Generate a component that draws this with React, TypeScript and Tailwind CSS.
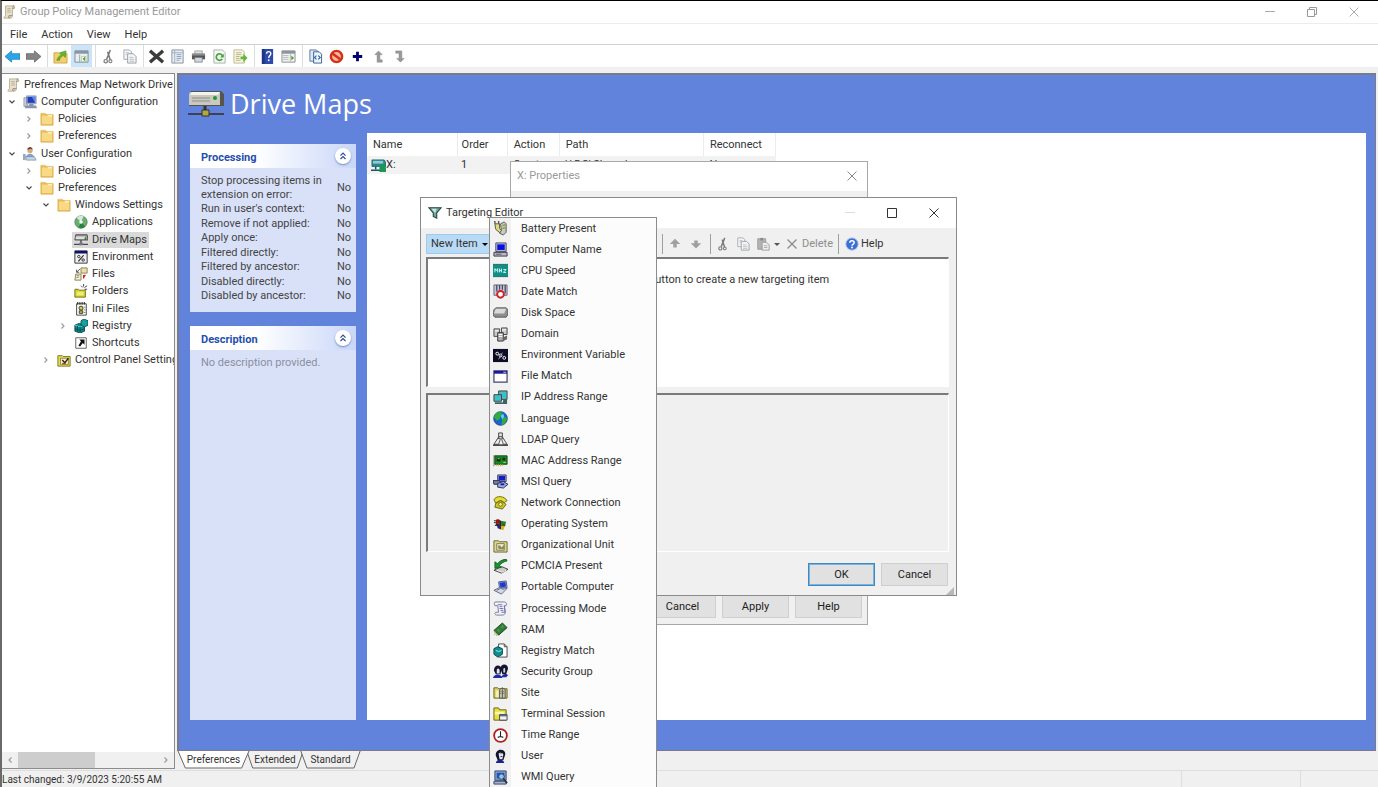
import type { ReactNode } from 'react'
import { clsx } from 'clsx'

const ICONS: Record<string, ReactNode> = {
  scroll: (
    <>
      <path d="M4 1h10l-2 2v9c0 2-1 3-3 3H2l2-3z" fill="#e6dfcd" stroke="#a89c80" strokeWidth=".8" />
      <path d="M12 1c2 0 3 1 2 3h-2M9 15c-2 0-2-2-1-3h4" fill="#c9bea0" stroke="#8f8468" strokeWidth=".8" />
      <path d="M6 4h4M6 6h4M6 8h4" stroke="#b8ae95" />
    </>
  ),
  back: <path d="M0 8l7-6v3h9v6H7v3z" fill="#2aa5e8" stroke="#1c7fbd" strokeWidth=".8" />,
  forward: <path d="M16 8L9 2v3H0v6h9v3z" fill="#848484" stroke="#666" strokeWidth=".8" />,
  folderUp: (
    <>
      <path d="M1 4h5l1 1h8v10H1z" fill="#f3cf6c" stroke="#c39a3a" strokeWidth=".8" />
      <path d="M4 12c1-3 3-5 5-6L7 4l7-2-1 7-2-2c-2 1-4 3-4 5z" fill="#62b52c" stroke="#43891a" strokeWidth=".6" />
    </>
  ),
  paneLeft: (
    <>
      <path d="M1 2h14v12H1z" fill="#e9eef3" stroke="#7f8a94" />
      <path d="M1 2h14v3H1z" fill="#8796a3" />
      <path d="M6 6v8" stroke="#9aa" />
      <path d="M8 8h5v5H8z" fill="#fff" stroke="#9bb88c" strokeWidth=".6" />
      <path d="M12 8v5l-3-2.500z" fill="#5aa02c" />
    </>
  ),
  paneRight: (
    <>
      <path d="M1 2h14v12H1z" fill="#f1f1ef" stroke="#8b9096" />
      <path d="M1 2h14v3H1z" fill="#8b949c" />
      <path d="M2 7h6M2 9h6M2 11h6M10 5v9" stroke="#b5bac0" />
      <path d="M11 7v5l3-2.500z" fill="#5aa02c" />
    </>
  ),
  cut: (
    <>
      <path d="M10 1L6 11M7 3l3 9" stroke="#777" strokeWidth="1.600" fill="none" />
      <circle cx="5" cy="13" r="1.800" fill="none" stroke="#777" strokeWidth="1.300" />
      <circle cx="10" cy="13" r="1.600" fill="none" stroke="#888" strokeWidth="1.300" />
    </>
  ),
  copy: (
    <>
      <path d="M2 1h6l2 2v8H2z" fill="#f4f4f4" stroke="#a5abb2" />
      <path d="M6 5h6l3 3v7H6z" fill="#f4f4f4" stroke="#989ea6" />
      <path d="M4 4h3M4 6h2M8 9h4M8 11h5M8 13h5" stroke="#b9bfc6" />
    </>
  ),
  paste: (
    <>
      <path d="M2 2h9v12H2z" fill="#b3b3b3" stroke="#999" />
      <path d="M5 1h3v3H5z" fill="#888" />
      <path d="M7 6h5l3 3v6H7z" fill="#ededed" stroke="#999" />
      <path d="M9 10h4M9 12h4" stroke="#aaa" />
    </>
  ),
  delete: <path d="M1 2l14 12M15 2L1 14" stroke="#3c3c3c" strokeWidth="3.600" fill="none" />,
  thinX: <path d="M2 2l12 12M14 2L2 14" stroke="#8d8d8d" strokeWidth="1.800" fill="none" />,
  properties: (
    <>
      <path d="M2 1h12v14H2z" fill="#e8edf2" stroke="#8793a0" />
      <path d="M2 4h12M5 1v14" stroke="#9fb0c0" />
      <path d="M7 6h5M7 8h5M7 10h5M7 12h3" stroke="#87a2bf" />
    </>
  ),
  print: (
    <>
      <path d="M4 2h8v4H4z" fill="#dcdcdc" stroke="#999" strokeWidth=".8" />
      <path d="M1 5h14v6H1z" fill="#555" />
      <path d="M1 5h14v2H1z" fill="#8b8b8b" />
      <path d="M4 9h8v5H4z" fill="#cfd9e4" stroke="#777" strokeWidth=".8" />
    </>
  ),
  refresh: (
    <>
      <path d="M2 1h9l3 3v11H2z" fill="#f7f7f7" stroke="#a9b0a5" />
      <path d="M11.500 8A3.500 3.500 0 1 0 11 10.500" fill="none" stroke="#45a53a" strokeWidth="1.800" />
      <path d="M12.500 5v4h-4z" fill="#45a53a" />
    </>
  ),
  exportList: (
    <>
      <path d="M1 1h9l2 2v12H1z" fill="#f8f6e6" stroke="#bcb78e" />
      <path d="M3 4h6M3 6h6M3 8h4M3 10h4M3 12h5" stroke="#b9b27a" />
      <path d="M8 8h3V5l4.500 4.500L11 14v-3H8z" fill="#62b63a" />
    </>
  ),
  helpBook: (
    <>
      <path d="M2 0h12v16H2z" fill="#2c4aa8" />
      <path d="M2 0h3v16H2z" fill="#1d3480" />
      <path d="M7 5c0-3 4.500-3 4.500 0 0 2-2.200 2-2.200 4.500" fill="none" stroke="#fff" strokeWidth="1.500" />
      <circle cx="9.300" cy="12" r="1" fill="#fff" />
    </>
  ),
  docSearch: (
    <>
      <path d="M2 1h7l2 2v10H2z" fill="#dde9f7" stroke="#58789e" />
      <path d="M6 3h6l2.500 2.500V15H6z" fill="#edf4fb" stroke="#3b5f8d" />
      <path d="M9 7l-2 2 2 2M11 7l2 2-2 2" fill="none" stroke="#2b60b0" strokeWidth="1.200" />
    </>
  ),
  stop: (
    <>
      <circle cx="8" cy="8" r="6" fill="#f2b8a4" stroke="#d83014" strokeWidth="2.600" />
      <path d="M4 5l8 6" stroke="#d83014" strokeWidth="2.600" />
    </>
  ),
  plus: <path d="M8 3v10M3 8h10" stroke="#00006e" strokeWidth="3" />,
  bendUp: <path d="M8 2L4 6h2.500v8H12v-2.500H9.500V6H12z" fill="#999" stroke="#888" strokeWidth=".5" />,
  bendDown: <path d="M9 14l-4-4h2.500V4.500H4V2h6.500v8H13z" fill="#999" stroke="#888" strokeWidth=".5" />,
  computer: (
    <>
      <path d="M1 3h4v10H1z" fill="#c8ccd6" stroke="#777d90" strokeWidth=".7" />
      <path d="M4 1h11v9H4z" fill="#d3d6de" stroke="#6a7084" strokeWidth=".7" />
      <path d="M5 2h9v7H5z" fill="#1c3fc4" />
      <path d="M10 2h4v7z" fill="#5f86ee" />
      <path d="M7 10h5v2H7zM3 12h12l1 3H2z" fill="#8b93ad" />
    </>
  ),
  userConfig: (
    <>
      <circle cx="8" cy="4" r="3" fill="#d8a878" />
      <path d="M5 3c0-4 6-4 6 0l-2-1z" fill="#5c4630" />
      <path d="M3 13c0-7 10-7 10 0z" fill="#7ea4cc" />
      <path d="M0 8h3v7H0z" fill="#9aa8c0" />
      <path d="M3 11h10l2 4H4z" fill="#c5d2e0" stroke="#6f87a5" strokeWidth=".7" />
    </>
  ),
  folder: (
    <>
      <path d="M1 2h6l1 1h7v12H1z" fill="#e9bb55" />
      <path d="M2 4h12v10H2z" fill="#f9d983" />
      <path d="M9 2h5v3H9z" fill="#fff3c9" />
      <path d="M1 1.500h5l1 1.500h8v12H1z" fill="none" stroke="#d6a443" strokeWidth=".7" />
    </>
  ),
  disc: (
    <>
      <circle cx="8" cy="8" r="7" fill="#68b06d" stroke="#5a7a60" />
      <path d="M8 8L3 3a7 7 0 0 1 8-1.500z" fill="#d6e9d5" />
      <path d="M8 8l5 5a7 7 0 0 1-8 1.500z" fill="#2e8244" />
      <circle cx="8" cy="8" r="2" fill="#fff" />
    </>
  ),
  netDrive: (
    <>
      <path d="M2 2h13l1 6H1z" fill="#9d9d9d" stroke="#444" />
      <path d="M2 4h11v3H2z" fill="#dedede" />
      <path d="M13 5v3" stroke="#267a2c" strokeWidth="1.500" />
      <path d="M8 8v5M0 13h16" stroke="#4a4a4a" strokeWidth="1.600" />
      <path d="M6 11h4v3H6z" fill="#777" />
    </>
  ),
  mappedDrive: (
    <>
      <path d="M1 2h13l2 3v4H1z" fill="#28888e" stroke="#185b63" strokeWidth=".8" />
      <path d="M2 3h11v3H2z" fill="#8fcbd6" />
      <path d="M5 9v3M0 13h12" stroke="#1c5560" strokeWidth="1.600" />
      <path d="M9 15V9l3-3 4 4v5z" fill="#179a58" />
    </>
  ),
  envWindow: (
    <>
      <path d="M1 1h14v14H1z" fill="#f2f2f2" stroke="#222" />
      <path d="M1 1h14v3H1z" fill="#101070" />
      <circle cx="5.500" cy="7.500" r="1.400" fill="none" stroke="#222" />
      <circle cx="10.500" cy="11.500" r="1.400" fill="none" stroke="#222" />
      <path d="M11 6l-6 7" stroke="#222" strokeWidth="1.300" />
    </>
  ),
  files: (
    <>
      <path d="M8 1h7v6H8z" fill="#e8e0ac" stroke="#857c48" />
      <path d="M2 8h6v7H1z" fill="#f2eecb" stroke="#857c48" />
      <path d="M3 6l4-4M3 6V3M3 6h3" stroke="#444" fill="none" />
      <path d="M11 9v4M13 9l-2 3" stroke="#d32020" strokeWidth="1.500" />
      <path d="M3 10h3M3 12h2" stroke="#777" />
    </>
  ),
  newFolder: (
    <>
      <path d="M1 6h4l1 1h7v8H1z" fill="#d5d531" stroke="#6b6b10" />
      <path d="M3 9h8v4H3z" fill="#eeee77" />
      <path d="M11 0v3M8 2l2 2M15 2l-3 2M15 6h-3" stroke="#333" />
    </>
  ),
  ini: (
    <>
      <path d="M3 2h11v13H3z" fill="#fff" stroke="#333" />
      <path d="M4 0v3M6 0v3M8 0v3M10 0v3M12 0v3" stroke="#333" />
      <circle cx="8" cy="7" r="2.300" fill="#d4cc38" stroke="#333" />
      <path d="M6 10h4v3H6z" fill="#c4bc38" stroke="#333" />
      <path d="M11 6h2M11 9h2M11 12h2" stroke="#777" />
    </>
  ),
  registry: (
    <>
      <path d="M1 7l5-2 6 2v7l-5 2-6-2z" fill="#0d8888" stroke="#054a4a" />
      <path d="M1 7l6 2 5-2" fill="none" stroke="#6ddcdc" />
      <path d="M8 2l3-2 5 2v5l-4 2-4-2z" fill="#17a0a0" stroke="#054a4a" />
      <path d="M7 9v6M4 8v6M1 11l6 2 5-2" stroke="#054a4a" fill="none" />
    </>
  ),
  shortcut: (
    <>
      <path d="M2 2h12v12H2z" fill="#fff" stroke="#555" />
      <path d="M6 4h6v6l-2-2-3 4-2-1 3-5z" fill="#111" />
    </>
  ),
  controlFolder: (
    <>
      <path d="M1 3h5l1 1h8v11H1z" fill="#e3dc4c" stroke="#77701a" />
      <path d="M4 6h9v7H4z" fill="#f6f3c0" stroke="#555" strokeWidth=".7" />
      <path d="M6 8l3 3 4-5" fill="none" stroke="#222" strokeWidth="1.600" />
      <path d="M6 12h4" stroke="#cc2d1b" strokeWidth="1.500" />
    </>
  ),
  funnel: (
    <>
      <path d="M1 2h14l-5 6v6l-4-2V8z" fill="#6aa79b" stroke="#26413f" strokeWidth="1.200" />
      <path d="M4 3h6L8 8z" fill="#cfe6e0" />
    </>
  ),
  help: (
    <>
      <circle cx="8" cy="8" r="7" fill="#3a6fd8" stroke="#a9bce0" />
      <path d="M5.500 6.500c0-3 5-3 5 0 0 1.800-2.300 1.600-2.500 3.500" fill="none" stroke="#fff" strokeWidth="1.700" />
      <circle cx="8" cy="12" r="1.100" fill="#fff" />
    </>
  ),
  battery: (
    <>
      <path d="M2 3h5v5l3 3-2 2-5-4z" fill="#dcd98a" stroke="#5a5a3a" />
      <path d="M2 0v3M6 0v3" stroke="#555" strokeWidth="1.500" />
      <path d="M8 3l4-2 2 2v9l-3 3-4-2 2-3z" fill="#c9cbbd" stroke="#555" />
      <path d="M10 5l3-1M10 8l3-1" stroke="#8c9d42" strokeWidth="1.500" />
    </>
  ),
  pc: (
    <>
      <path d="M3 1h11v9H3z" fill="#c4c4d0" stroke="#44445c" />
      <path d="M4.500 2.500h8v6h-8z" fill="#0810e0" />
      <path d="M1 11h14v4H1z" fill="#b9b9c8" stroke="#33334a" />
      <path d="M3 13h6" stroke="#555" />
    </>
  ),
  cpu: (
    <>
      <path d="M0 1h16v14H0z" fill="#0f8f86" />
      <path d="M0 1.500h16M0 14.500h16" stroke="#4f615f" strokeDasharray="1.500 1" />
      <path d="M2 10V6l1.500 2L5 6v4M7 6v4M7 8h2M9 6v4M11 7h3l-3 3h3" fill="none" stroke="#d6fffb" />
    </>
  ),
  date: (
    <>
      <path d="M1 1h14v11H1z" fill="#c5c5d4" stroke="#66667a" />
      <path d="M4 1v7M7 1v5M10 1v5M13 1v9" stroke="#454568" strokeWidth="1.300" />
      <circle cx="8" cy="11" r="3.600" fill="#fff" stroke="#cf2020" strokeWidth="2" />
    </>
  ),
  disk: (
    <>
      <path d="M3 3h11l2 2v5l-2 3H2l-2-2V6z" fill="#8e8e8e" stroke="#444" strokeWidth=".8" />
      <path d="M3 4h11L12 9H1z" fill="#dadada" />
    </>
  ),
  domain: (
    <>
      <path d="M1 2h6v8H1zM9 1h6v7H9z" fill="#c9c9c9" stroke="#444" />
      <path d="M5 6h6v9H5z" fill="#ababab" stroke="#333" />
      <path d="M2 4h4M10 3h4M6 8h4M6 10h4" stroke="#fff" />
      <path d="M11 11l4-2v4l-4 2z" fill="#666" />
    </>
  ),
  envVar: (
    <>
      <path d="M0 1h16v14H0z" fill="#0c0c24" />
      <circle cx="4.500" cy="6" r="1.500" fill="none" stroke="#fff" />
      <circle cx="8" cy="8" r="1.500" fill="none" stroke="#fff" />
      <circle cx="12" cy="10.500" r="1.500" fill="none" stroke="#fff" />
      <path d="M10 5l-4 7" stroke="#aab" />
    </>
  ),
  window: (
    <>
      <path d="M1 2h14v12H1z" fill="#fff" stroke="#44446a" strokeWidth="1.300" />
      <path d="M1 2h14v3H1z" fill="#1a1a9a" />
      <path d="M11 3.500h3" stroke="#ccd" />
    </>
  ),
  ipRange: (
    <>
      <path d="M6 1h9v9H6z" fill="#7fa9ab" stroke="#1c4b52" />
      <path d="M8 3h6v5H8z" fill="#27c8d0" />
      <path d="M1 5h8v7H1z" fill="#7fa9ab" stroke="#1c4b52" />
      <path d="M2.500 6.500h5v4h-5z" fill="#27c8d0" />
      <path d="M2 13h8v2H2zM11 10h4v5h-5" fill="#3f6066" />
    </>
  ),
  globe: (
    <>
      <circle cx="8" cy="8" r="7.300" fill="#1c62cf" stroke="#123a7c" strokeWidth=".8" />
      <path d="M2 4c3-4 6-3 8-2l-2 3-1 4-3 1-3-3zM10 8l4-2 1 3-3 5-3 1z" fill="#2fae3c" />
      <path d="M8 5l3-2 1 3-2 3z" fill="#5fd3e6" />
    </>
  ),
  ldap: (
    <>
      <path d="M8 2L2 13M8 2l6 11" stroke="#555" strokeWidth="1.400" />
      <path d="M6 1h4v4H6z" fill="#e2e2e2" stroke="#444" />
      <path d="M5 7h3l-2 6H1zM9 7h2l4 6h-4z" fill="#eee" stroke="#555" />
      <path d="M0 14h16" stroke="#333" strokeWidth="1.600" />
    </>
  ),
  mac: (
    <>
      <path d="M0 2h2v12H0z" fill="#b8b8a0" />
      <path d="M2 3h13v9H2z" fill="#1c8a25" stroke="#0c4512" />
      <path d="M4 5h4v4H4zM10 5h3v3h-3z" fill="#10300f" />
      <path d="M4 12v2M6 12v2M8 12v2M10 12v2" stroke="#c9b13d" />
      <path d="M5 6h2M11 10h3" stroke="#b0e068" />
    </>
  ),
  msi: (
    <>
      <path d="M5 1h9v7H5z" fill="#b9bdd0" stroke="#3a3e5a" />
      <path d="M6 2h7v5H6z" fill="#1020c0" />
      <path d="M0 7h7l2 4H1z" fill="#767ca0" stroke="#2a2f55" />
      <path d="M5 10l6-2 5 3-5 4-6-1z" fill="#9fa9d8" stroke="#2a2f55" />
      <path d="M8 11h4" stroke="#1020c0" strokeWidth="2" />
    </>
  ),
  network: (
    <>
      <path d="M1 5c3-5 11-4 14 1l-3 2-3-2-4 1-2 2z" fill="#e4df2e" stroke="#6b6710" />
      <path d="M3 9l5-3 6 4-4 5-8-2z" fill="#cdc724" stroke="#6b6710" />
      <circle cx="8" cy="10" r="2" fill="#f6f3a0" stroke="#6b6710" />
    </>
  ),
  flag: (
    <>
      <path d="M3 3c2-1 3-1 5 1v4C6 7 5 7 3 8z" fill="#8a1c18" />
      <path d="M8 4l6 1-1 4-5-1z" fill="#2c7a2c" />
      <path d="M4 8c2-1 3 0 4 1v4l-3-1z" fill="#22229a" />
      <path d="M8 8l5 1-2 5-3-1z" fill="#d3b818" />
      <path d="M1 4h2M1 6h2M2 9h3M8 4v9M3 8l10 1" stroke="#222" />
    </>
  ),
  orgUnit: (
    <>
      <path d="M1 3h5l1 1h8v11H1z" fill="#dcd98a" stroke="#66633a" />
      <path d="M4 6h8v7H4z" fill="#f1efc8" stroke="#66633a" strokeWidth=".8" />
      <path d="M5 8h3l1 2 3-3v5H6z" fill="#8c8a68" />
    </>
  ),
  pcmcia: (
    <>
      <path d="M1 12l8-4 7 3-7 4z" fill="#c9c9c9" stroke="#444" />
      <path d="M14 0C9 1 6 3 5 5L2 3v7l7-1-2-2c1-2 4-4 8-5z" fill="#1a9433" stroke="#0b4f18" strokeWidth=".8" />
      <path d="M4 12l6 2 4-2" stroke="#eee" fill="none" />
    </>
  ),
  laptop: (
    <>
      <path d="M6 2l8-1 1 7-8 1z" fill="#9fb4e6" stroke="#4a5a8a" />
      <path d="M7 3l6-1 1 5-6 1z" fill="#2038d0" />
      <path d="M1 11l6-3 8 1-6 6z" fill="#d5d9e6" stroke="#5b6585" />
      <path d="M4 11l4-2 4 1" fill="none" stroke="#667" />
    </>
  ),
  processing: (
    <>
      <path d="M3 1h9c2 0 3 2 2 4h-2l1 7c0 2-1 3-3 3H4c-2 0-3-2-1-3h3L5 5H2c-1-2-1-4 1-4z" fill="#f1f1fb" stroke="#77779a" />
      <path d="M5 4h5M7 6h3M7 8h4M8 10h3M12 5l1 7H9" stroke="#6d6db0" fill="none" />
    </>
  ),
  ram: (
    <>
      <path d="M1 9l9-8 5 5-9 8z" fill="#278034" stroke="#134a1c" />
      <path d="M4 9l2-2 2 2-2 2zM8 5l2-2 2 2-2 2z" fill="#65805e" />
      <path d="M2 10v4M4 12v3" stroke="#c0b34e" />
    </>
  ),
  regMatch: (
    <>
      <path d="M6 1h6l3 3v11H6z" fill="#fff" stroke="#444" />
      <path d="M12 1v3h3" fill="none" stroke="#444" />
      <path d="M1 6l4-2 5 2v6l-5 3-4-3z" fill="#128c8c" stroke="#064747" />
      <path d="M3 8l3 1 3-1" fill="none" stroke="#8ff" />
    </>
  ),
  group: (
    <>
      <path d="M1 7c0-7 8-7 8-1l-1 5H3z" fill="#14142c" />
      <path d="M4 6c1-2 3-1 3 1v3H4z" fill="#e3e3ee" />
      <path d="M8 5c0-6 8-6 8 0l-2 6h-4z" fill="#14142c" />
      <path d="M11 5c1-1 2-1 2 1v3h-2z" fill="#ccd0e6" />
      <path d="M0 15c1-5 9-5 10 0zM9 14c1-4 6-4 7-2l-2 2z" fill="#1c2aa8" />
    </>
  ),
  site: (
    <>
      <path d="M1 3h4l1 1h9v10H1z" fill="#dcd66a" stroke="#66601a" />
      <path d="M3 6h3v7H3z" fill="#f3f0b4" />
      <path d="M7 5l3-2 3 2v9H7z" fill="#c9c9b6" stroke="#555" />
      <path d="M10 3v11M8 7h1M8 9h1M11 7h1M11 9h1" stroke="#555" />
    </>
  ),
  terminal: (
    <>
      <path d="M1 1h5l1 2h7v11H1z" fill="#e6df3e" stroke="#66601a" />
      <path d="M2 5h10v3H2z" fill="#f8f5a4" />
      <path d="M7 8h8v6H7z" fill="#f2f2f2" stroke="#444" />
      <path d="M7 8h8v2H7z" fill="#5a6494" />
    </>
  ),
  clock: (
    <>
      <circle cx="8" cy="8" r="6.800" fill="#fff" stroke="#b01f1f" strokeWidth="1.900" />
      <path d="M8 3.500V9l3 1M8 9l-3 1" fill="none" stroke="#222" strokeWidth="1.200" />
    </>
  ),
  user: (
    <>
      <path d="M3 7c-1-8 11-8 10-1l-2 6H5z" fill="#14142c" />
      <path d="M6 5c1-2 5-1 5 1l-1 5H7z" fill="#e6e6f2" />
      <path d="M8 5h1M8 8h2" stroke="#333" />
      <path d="M3 15c1-5 8-5 9 0z" fill="#1a2490" />
    </>
  ),
  wmi: (
    <>
      <path d="M2 1h12v10H2z" fill="#8aa0c4" stroke="#32466e" />
      <path d="M4 3h8v6H4z" fill="#1c4fd0" />
      <path d="M1 12h13v3H1z" fill="#a6b0c6" stroke="#32466e" />
      <circle cx="9" cy="7" r="3" fill="#8cc4ee" stroke="#245" />
      <path d="M11 9l4 5" stroke="#234" strokeWidth="1.800" />
    </>
  ),
}

function Icon({ name, className = 'w-4 h-4' }: { name: string; className?: string }) {
  return (
    <svg viewBox="0 0 16 16" aria-hidden="true" className={clsx('shrink-0', className)}>
      {ICONS[name]}
    </svg>
  )
}

type TreeItem = { label: string; icon: string; depth: number; open?: boolean; closed?: boolean; selected?: boolean }

const TREE: TreeItem[] = [
  { label: 'Prefrences Map Network Drive [S', icon: 'scroll', depth: 0 },
  { label: 'Computer Configuration', icon: 'computer', depth: 1, open: true },
  { label: 'Policies', icon: 'folder', depth: 2, closed: true },
  { label: 'Preferences', icon: 'folder', depth: 2, closed: true },
  { label: 'User Configuration', icon: 'userConfig', depth: 1, open: true },
  { label: 'Policies', icon: 'folder', depth: 2, closed: true },
  { label: 'Preferences', icon: 'folder', depth: 2, open: true },
  { label: 'Windows Settings', icon: 'folder', depth: 3, open: true },
  { label: 'Applications', icon: 'disc', depth: 4 },
  { label: 'Drive Maps', icon: 'netDrive', depth: 4, selected: true },
  { label: 'Environment', icon: 'envWindow', depth: 4 },
  { label: 'Files', icon: 'files', depth: 4 },
  { label: 'Folders', icon: 'newFolder', depth: 4 },
  { label: 'Ini Files', icon: 'ini', depth: 4 },
  { label: 'Registry', icon: 'registry', depth: 4, closed: true },
  { label: 'Shortcuts', icon: 'shortcut', depth: 4 },
  { label: 'Control Panel Setting', icon: 'controlFolder', depth: 3, closed: true },
]

const INDENT = ['pl-0', 'pl-1', 'pl-[21px]', 'pl-[38px]', 'pl-[55px]']

const TOOLBAR: string[][] = [
  ['back', 'forward'],
  ['folderUp', 'paneLeft'],
  ['cut', 'copy'],
  ['delete', 'properties', 'print', 'refresh', 'exportList'],
  ['helpBook', 'paneRight'],
  ['docSearch', 'stop', 'plus', 'bendUp', 'bendDown'],
]

const PROCESSING = [
  'Stop processing items in extension on error:',
  "Run in user's context:",
  'Remove if not applied:',
  'Apply once:',
  'Filtered directly:',
  'Filtered by ancestor:',
  'Disabled directly:',
  'Disabled by ancestor:',
]

const MENU: [string, string][] = [
  ['battery', 'Battery Present'],
  ['pc', 'Computer Name'],
  ['cpu', 'CPU Speed'],
  ['date', 'Date Match'],
  ['disk', 'Disk Space'],
  ['domain', 'Domain'],
  ['envVar', 'Environment Variable'],
  ['window', 'File Match'],
  ['ipRange', 'IP Address Range'],
  ['globe', 'Language'],
  ['ldap', 'LDAP Query'],
  ['mac', 'MAC Address Range'],
  ['msi', 'MSI Query'],
  ['network', 'Network Connection'],
  ['flag', 'Operating System'],
  ['orgUnit', 'Organizational Unit'],
  ['pcmcia', 'PCMCIA Present'],
  ['laptop', 'Portable Computer'],
  ['processing', 'Processing Mode'],
  ['ram', 'RAM'],
  ['regMatch', 'Registry Match'],
  ['group', 'Security Group'],
  ['site', 'Site'],
  ['terminal', 'Terminal Session'],
  ['clock', 'Time Range'],
  ['user', 'User'],
  ['wmi', 'WMI Query'],
]

function WindowButton({ kind, className }: { kind: 'min' | 'max' | 'restore' | 'close'; className?: string }) {
  return (
    <button aria-label={kind} className={clsx('flex w-[42px] items-center justify-center', className)}>
      <svg viewBox="0 0 10 10" className="w-[10px] h-[10px]" fill="none" stroke="currentColor">
        {kind === 'min' && <path d="M0 4.500h10" />}
        {kind === 'max' && <path d="M.5 .5h9v9h-9z" />}
        {kind === 'restore' && <path d="M.5 2.500h7v7h-7zM2.500 2.500v-2h7v7h-2" />}
        {kind === 'close' && <path d="M.5 .5l9 9M9.500 .5l-9 9" />}
      </svg>
    </button>
  )
}

function Chevron({ open }: { open?: boolean }) {
  return (
    <svg viewBox="0 0 8 8" className="w-2 h-2" fill="none" stroke={open ? '#444' : '#999'} strokeWidth="1.100">
      {open ? <path d="M1.500 2.500L4 5l2.500-2.500" /> : <path d="M2.500 1.500L5 4 2.500 6.500" />}
    </svg>
  )
}

function Tree() {
  return (
    <ul className="grid h-[295px] auto-rows-fr pt-0.5">
      {TREE.map((item, i) => (
        <li key={i} className={clsx('flex items-center whitespace-nowrap', INDENT[item.depth])}>
          {item.depth > 0 && (
            <span className="flex w-[13px] shrink-0 items-center">
              {(item.open || item.closed) && <Chevron open={item.open} />}
            </span>
          )}
          <button className={clsx('flex h-4 items-center gap-1 px-0.5', item.selected && 'bg-[#d9d9d9]')}>
            <Icon name={item.icon} className="w-[14px] h-[14px]" />
            {item.label}
          </button>
        </li>
      ))}
    </ul>
  )
}

function PanelHeader({ title }: { title: string }) {
  return (
    <div className="flex h-6 items-center justify-between bg-gradient-to-r from-white from-40% to-[#c9d6f8] pl-[11px] pr-[5px]">
      <h2 className="pt-1 font-bold text-[#1f4fb0]">{title}</h2>
      <button
        aria-label={`Collapse ${title}`}
        className="flex h-4 w-4 items-center justify-center rounded-full bg-white shadow-[0_1px_2px_#7088c0]"
      >
        <svg viewBox="0 0 8 8" className="w-2 h-2" fill="none" stroke="#2b4a9a" strokeWidth="1.200">
          <path d="M1.500 3.700L4 1.200l2.500 2.500M1.500 7L4 4.500 6.500 7" />
        </svg>
      </button>
    </div>
  )
}

function BottomTab({ label, active, className }: { label: string; active?: boolean; className: string }) {
  return (
    <button className={clsx('relative h-[18px] text-[10px]', className)}>
      <svg viewBox="0 0 70 18" preserveAspectRatio="none" className="absolute inset-0 h-full w-full">
        <path d="M1 0l7 17h54l7-17" fill={active ? '#fff' : '#f0f0f0'} stroke="#666" vectorEffect="non-scaling-stroke" />
      </svg>
      <span className="relative">{label}</span>
    </button>
  )
}

function DialogButton({ label, primary }: { label: string; primary?: boolean }) {
  return (
    <button
      className={clsx(
        'h-[23px] w-[67px] border bg-[#e1e1e1] text-[#222]',
        primary ? 'border-[#3c8ac4] shadow-[inset_0_0_0_1px_#7fb2da]' : 'border-[#cfcfcf]'
      )}
    >
      {label}
    </button>
  )
}

function PropertiesDialog() {
  return (
    <section
      aria-label="X: Properties"
      className="absolute left-[508px] top-[160px] flex h-[464px] w-[358px] flex-col justify-between border border-[#a8a8a8] bg-[#f0f0f0]"
    >
      <header className="flex h-[29px] items-stretch justify-between bg-white pb-0.5 pl-[6px] text-[#9a9a9a]">
        <h2 className="self-center">X: Properties</h2>
        <WindowButton kind="close" className="-mr-1.5 text-[#888]" />
      </header>
      <footer className="flex justify-end gap-1.5 px-[5px] pb-1.5">
        <DialogButton label="Cancel" />
        <DialogButton label="Apply" />
        <DialogButton label="Help" />
      </footer>
    </section>
  )
}

function TargetingEditor() {
  return (
    <section
      aria-label="Targeting Editor"
      className="absolute left-[418px] top-[196px] flex h-[399px] w-[537px] flex-col border border-[#8a8a8a] bg-[#f0f0f0]"
    >
      <header className="flex h-[30px] items-stretch bg-white pl-[7px] pr-px">
        <div className="flex flex-1 items-center gap-1">
          <Icon name="funnel" className="w-[14px] h-[14px]" />
          <h2>Targeting Editor</h2>
        </div>
        <WindowButton kind="min" className="text-[#ddd]" />
        <WindowButton kind="max" />
        <WindowButton kind="close" />
      </header>

      <div className="mt-1.5 flex h-5 items-center whitespace-nowrap px-[5px]">
        <button className="flex h-5 w-[64px] items-center gap-1 border border-[#9ccbf0] bg-[#b8daf5] pl-1">
          New Item
          <span className="border-x-[3px] border-t-[3px] border-x-transparent border-t-black" />
        </button>
        <div className="w-[172px]" />
        <div className="flex h-5 items-center border-l border-[#a0a0a0] px-[5px] text-[#a0a0a0]">
          <button aria-label="Move up" className="w-[21px]">
            <svg viewBox="0 0 16 16" className="w-[14px] h-[14px]" fill="currentColor">
              <path d="M8 2l6 6h-4v4H6V8H2z" />
            </svg>
          </button>
          <button aria-label="Move down" className="w-[16px]">
            <svg viewBox="0 0 16 16" className="w-[14px] h-[14px]" fill="currentColor">
              <path d="M8 13l6-6h-4V4H6v3H2z" />
            </svg>
          </button>
        </div>
        <div className="flex h-5 items-center gap-1.5 border-l border-[#a0a0a0] px-[5px] text-[#8d8d8d]">
          <button aria-label="Cut"><Icon name="cut" className="w-[14px] h-[14px]" /></button>
          <button aria-label="Copy"><Icon name="copy" className="w-[14px] h-[14px]" /></button>
          <button aria-label="Paste" className="flex items-center gap-1">
            <Icon name="paste" className="w-[14px] h-[14px]" />
            <span className="border-x-[3px] border-t-[3px] border-x-transparent border-t-[#555]" />
          </button>
          <button className="flex items-center gap-1">
            <Icon name="thinX" className="w-3 h-3" />
            Delete
          </button>
        </div>
        <button className="flex h-5 items-center gap-0.5 border-l border-[#a0a0a0] pl-1.5">
          <Icon name="help" className="w-[14px] h-[14px]" />
          Help
        </button>
      </div>

      <div className="ml-[5px] mr-[7px] mt-[3px] h-[130px] border-2 border-b border-r border-b-white border-l-[#7a7a7a] border-r-white border-t-[#7a7a7a] bg-white pl-2 pt-[14px] text-center">
        Click the New Item button to create a new targeting item
      </div>
      <div className="ml-[5px] mr-[7px] mt-[6px] h-[159px] border-2 border-b border-r border-b-white border-l-[#7a7a7a] border-r-white border-t-[#7a7a7a]" />

      <footer className="relative flex flex-1 items-center justify-end gap-1.5 px-2 pt-0.5">
        <DialogButton label="OK" primary />
        <DialogButton label="Cancel" />
        <svg viewBox="0 0 8 8" className="absolute bottom-0 right-0.5 w-2 h-2" fill="#b8b8b8">
          <path d="M8 0v8H0z" />
        </svg>
      </footer>
    </section>
  )
}

function ItemMenu() {
  return (
    <ul className="absolute -bottom-px left-[487px] top-[216px] grid w-[168px] auto-rows-fr border border-b-0 border-[#8c8c8c] bg-gradient-to-r from-[#f1f1f1] from-[21px] to-[#fcfcfc] to-[21px]">
      {MENU.map(([icon, label]) => (
        <li key={label}>
          <button className="flex h-full w-full items-center gap-[13px] pl-[3px] text-left">
            <Icon name={icon} className="w-[15px] h-[15px]" />
            {label}
          </button>
        </li>
      ))}
    </ul>
  )
}

export default function App() {
  return (
    <div className="relative flex h-screen flex-col overflow-hidden border-l-2 border-t border-l-[#6a6a6a] border-t-black bg-[#f0f0f0] font-['Roboto',sans-serif] text-[11px] leading-[14px] text-[#333]">
      {/* Title bar */}
      <header className="flex h-[23px] items-stretch border-b border-[#ececec] bg-white pr-[3px] text-[#999]">
        <div className="flex flex-1 items-center gap-1">
          <Icon name="scroll" className="w-[14px] h-[14px]" />
          <h1>Group Policy Management Editor</h1>
        </div>
        <WindowButton kind="min" className="text-[#aaa]" />
        <WindowButton kind="restore" className="text-[#999]" />
        <WindowButton kind="close" className="text-[#aaa]" />
      </header>

      {/* Menu bar */}
      <nav className="flex h-[21px] items-center gap-[14px] border-b border-[#d0d0d0] bg-white pl-2 pt-0.5">
        <button>File</button>
        <button>Action</button>
        <button>View</button>
        <button>Help</button>
      </nav>

      {/* Toolbar */}
      <div className="flex h-[22px] items-center bg-white">
        {TOOLBAR.map((group, i) => (
          <div key={i} className={clsx('flex', i > 0 && 'ml-[3px] border-l border-[#dcdcdc] pl-[2px]')}>
            {group.map((name) => (
              <button
                key={name}
                aria-label={name}
                className={clsx('flex h-[22px] w-[21px] items-center justify-center', name === 'paneLeft' && 'bg-[#cce4f7]')}
              >
                <Icon name={name} className="w-[15px] h-[15px]" />
              </button>
            ))}
          </div>
        ))}
      </div>

      <main className="mt-[6px] flex min-h-0 flex-1">
        {/* Console tree */}
        <aside className="flex w-[173px] shrink-0 flex-col border-r border-t border-b border-[#8c8c8c] bg-white">
          <div className="min-h-0 flex-1 overflow-hidden pl-0.5">
            <Tree />
          </div>
          <div className="flex h-4 items-center justify-between bg-[#f0f0f0] px-1">
            <span className="rotate-180"><Chevron /></span>
            <span className="ml-1 h-4 w-[77px] bg-[#cdcdcd]" />
            <span className="ml-auto"><Chevron /></span>
          </div>
        </aside>

        {/* Extension pane */}
        <div className="ml-[2px] flex min-w-0 flex-1 flex-col">
          <div className="mr-0.5 flex min-h-0 flex-1 flex-col border-2 border-r border-b border-[#7a7a88] bg-[#6283dc] pb-[30px] pl-[11px] pr-[9px]">
            <div className="flex h-[58px] items-center gap-1.5">
              <svg viewBox="0 0 36 28" className="-ml-0.5 w-9 h-7" aria-hidden="true">
                <path d="M3 1h30l3 3v12H1V4z" fill="#55554e" />
                <path d="M2 2h30v13H1V4z" fill="#c9c9bf" />
                <path d="M4 2h28l-2 3H2z" fill="#f3f3ec" />
                <path d="M4 8h18M4 11h18" stroke="#8f8f88" />
                <circle cx="27" cy="8" r="2" fill="#1f9a33" />
                <path d="M0 24h36" stroke="#3c4254" strokeWidth="2" />
                <path d="M17 16v6" stroke="#333" strokeWidth="3" />
                <path d="M14 20h7v6h-7z" fill="#b7a83a" stroke="#333" />
              </svg>
              <span className="font-['Open_Sans',sans-serif] text-[27px] leading-8 text-white">Drive Maps</span>
            </div>
            <div className="flex min-h-0 flex-1 gap-[11px]">
              <div className="mt-[11px] flex w-[166px] shrink-0 flex-col gap-[14px] text-[#444]">
                <section className="bg-[#d9e1f9]">
                  <PanelHeader title="Processing" />
                  <dl className="flex h-[144px] flex-col justify-between pb-[9px] pl-[11px] pr-[5px] pt-[6px]">
                    {PROCESSING.map((label) => (
                      <div key={label} className="flex items-center justify-between">
                        <dt className="w-[125px]">{label}</dt>
                        <dd>No</dd>
                      </div>
                    ))}
                  </dl>
                </section>
                <section className="flex-1 bg-[#d9e1f9]">
                  <PanelHeader title="Description" />
                  <p className="pl-[11px] pt-[6px] text-[#8a8fa0]">No description provided.</p>
                </section>
              </div>

              <div className="min-w-0 flex-1 bg-white">
                <table className="w-[409px] table-fixed text-left">
                  <thead>
                    <tr className="h-[23px]">
                      <th className="w-[90px] border-r border-[#ececec] pl-1.5 font-normal">Name</th>
                      <th className="w-[50px] border-r border-[#ececec] pl-1 font-normal">Order</th>
                      <th className="w-[52px] border-r border-[#ececec] pl-1.5 font-normal">Action</th>
                      <th className="w-[144px] border-r border-[#ececec] pl-1.5 font-normal">Path</th>
                      <th className="w-[72px] border-r border-[#ececec] pl-1.5 font-normal">Reconnect</th>
                    </tr>
                  </thead>
                  <tbody>
                    <tr className="h-[18px] bg-[#f2f2f2]">
                      <td className="pl-1">
                        <div className="flex items-center">
                          <Icon name="mappedDrive" className="w-[15px] h-[15px]" />
                          X:
                        </div>
                      </td>
                      <td className="pl-1">1</td>
                      <td className="pl-1.5">Create</td>
                      <td className="pl-1.5">\\DC\Shared</td>
                      <td className="pl-1.5">No</td>
                    </tr>
                  </tbody>
                </table>
              </div>
            </div>
          </div>
          <div className="flex h-[18px]">
            <BottomTab label="Preferences" active className="z-10 w-[73px]" />
            <BottomTab label="Extended" className="-ml-1 w-[58px]" />
            <BottomTab label="Standard" className="-ml-1 w-[61px]" />
          </div>
        </div>
      </main>

      {/* Status bar */}
      <footer className="mt-px flex h-[17px] items-center border-t border-[#dedede]">
        <span className="flex-1 pt-0.5 text-[10px]">Last changed: 3/9/2023 5:20:55 AM</span>
        <span className="h-full w-[119px] border-l border-[#dedede]" />
        <span className="h-full w-[78px] border-l border-[#dedede]" />
      </footer>

      {/* Open windows */}
      <PropertiesDialog />
      <TargetingEditor />
      <ItemMenu />
    </div>
  )
}
